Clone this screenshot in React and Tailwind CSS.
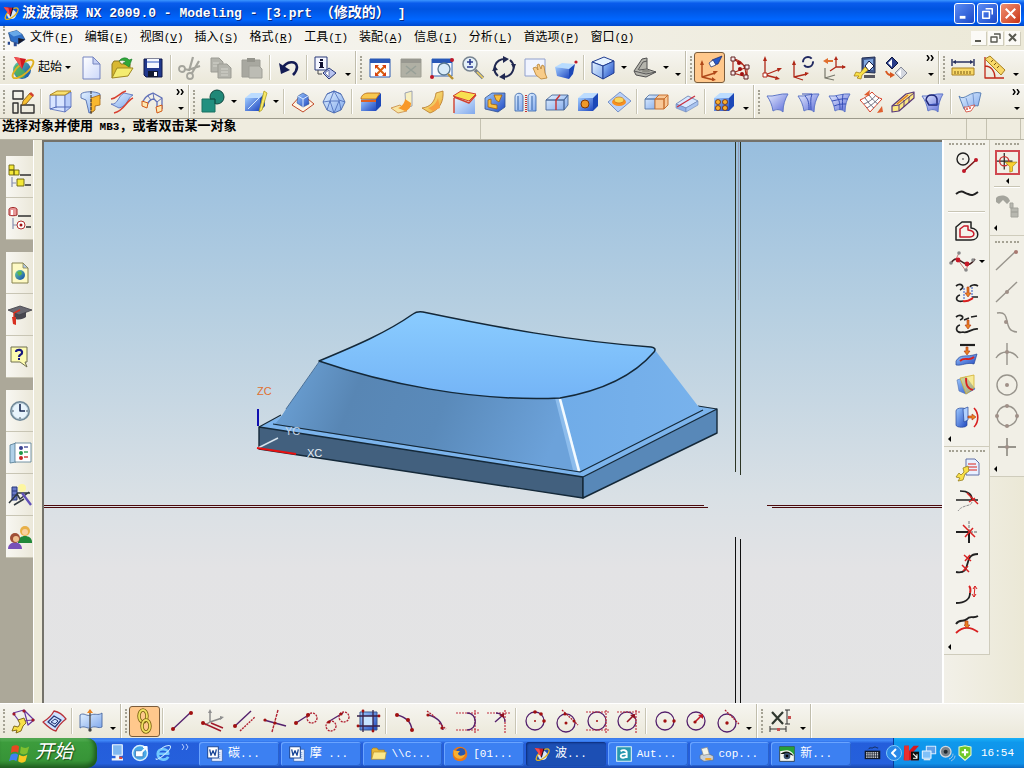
// App.jsx - NX modeling window
import React from "react";

/* ---------- drawing helpers ---------- */

// stroked path
const L = ({ d, c = "#1c1c3c", w = 1, dash }) => (
  <path d={d} fill="none" stroke={c} strokeWidth={w} strokeDasharray={dash} strokeLinejoin="round" />
);

// filled path
const F = ({ d, f, s = "none", w = 1 }) => (
  <path d={d} fill={f} stroke={s} strokeWidth={w} strokeLinejoin="round" />
);

// a set of small dots: [[x, y], ...]
const Dots = ({ at, c = "#a01010", r = 2 }) =>
  at.map(([x, y]) => <circle key={`${x}-${y}`} cx={x} cy={y} r={r} fill={c} />);

const Cube = () => (
  <>
    <F d="M1 6L13 1L23 5L12 10Z" f="#e6f3ff" s="#203c90" />
    <F d="M1 6L12 10V23L1 17Z" f="url(#sky)" s="#203c90" />
    <F d="M12 10L23 5V17L12 23Z" f="url(#blue)" s="#203c90" />
  </>
);

const Box = () => (
  <>
    <F d="M2 8L8 3H22L17 8Z" f="#bcdcff" />
    <F d="M17 8L22 3V16L17 21Z" f="#1c48b8" />
    <F d="M2 8H17V21H2Z" f="url(#blue)" />
  </>
);

const Axes = () => (
  <>
    <L d="M5 3V19L20 13M5 19L17 22" c="#b02818" w={1.3} />
    <F d="M5 0L7 5H3ZM22 12L18 16L17 12ZM20 23L15 24L16 20Z" f="#b02818" />
  </>
);

const Sheet = () => <F d="M1 6C8 7 14 3 22 4C19 9 17 15 17 22C14 19 10 19 7 21C6 15 4 10 1 6Z" f="url(#lav)" s="#6078c8" />;

const Ball = ({ x = 12, y = 12, r = 9 }) => <circle cx={x} cy={y} r={r} fill="none" stroke="#54206c" strokeWidth="1.3" />;

const icons = {
  nx: (
    <>
      <circle cx="11" cy="14" r="9" fill="url(#globe)" />
      <path d="M4 10C7 7 9 12 12 14C16 16 15 20 12 22C6 23 2 17 4 10Z" fill="#58b848" opacity="0.7" />
      <ellipse cx="12" cy="13" rx="13" ry="5" fill="none" stroke="#e0b020" strokeWidth="1.8" transform="rotate(-40 12 13)" />
      <F d="M3 1L15 3L11 13Z" f="#d01820" />
      <F d="M3 1L9 2L11 13Z" f="#f05050" />
    </>
  ),
  nxTitle: (
    <>
      <circle cx="13" cy="14" r="7" fill="#d8e8f8" />
      <ellipse cx="13" cy="13" rx="12" ry="5" fill="none" stroke="#e0b020" strokeWidth="2" transform="rotate(-40 13 13)" />
      <F d="M1 3L15 4L11 17Z" f="#d01820" />
      <F d="M1 3L8 4L11 17Z" f="#f05050" />
      <L d="M15 4L11 17" c="#181028" w={1.6} />
    </>
  ),
  newFile: (
    <>
      <F d="M4 1H14L21 8V23H4Z" f="url(#paper)" s="#7484c0" />
      <F d="M14 1V8H21Z" f="#c4cff4" s="#7484c0" />
    </>
  ),
  open: (
    <>
      <F d="M2 22V8L4 5H9L11 8H20V12" f="#d8b830" s="#8c7820" />
      <F d="M2 22L7 12H23L18 20Z" f="#f4ec70" s="#a08820" />
      <F d="M9 5C12 1 17 1 19 4L22 3L19 11L13 7L16 6C14 4 12 4 9 5Z" f="#30a838" s="#187828" w={0.6} />
    </>
  ),
  save: (
    <>
      <F d="M3 3H21V21H5L3 19Z" f="#20388c" s="#101848" />
      <path d="M6 3H18V12H6Z" fill="#f4f8ff" />
      <path d="M6 5H18V7H6Z" fill="#90a8e0" />
      <path d="M7 15H17V21H7Z" fill="#101830" />
      <path d="M13 16H16V20H13Z" fill="#fff" />
    </>
  ),
  cut: (
    <>
      <L d="M11 15L15 1M14 17L21 5M10 14L22 10" c="#a4a49c" w={2.2} />
      <L d="M11 14L6 13M13 16V18" c="#a4a49c" w={2} />
      <circle cx="4" cy="13" r="3" fill="none" stroke="#a4a49c" strokeWidth="1.800" />
      <circle cx="12" cy="20" r="3" fill="none" stroke="#a4a49c" strokeWidth="1.800" />
    </>
  ),
  copy: (
    <>
      <F d="M2 2H10L14 6V16H2Z" f="#b4b4ac" s="#9c9c94" />
      <F d="M9 8H18L22 12V22H9Z" f="#b4b4ac" s="#9c9c94" />
      <L d="M4 7H10M4 10H8M12 13H19M12 16H19M12 19H19" c="#d4d4cc" />
    </>
  ),
  paste: (
    <>
      <F d="M2 4H20V21H2Z" f="#a8a8a0" s="#9c9c94" />
      <path d="M7 2H15V6H7Z" fill="#94948c" />
      <F d="M9 10H19L22 13V22H9Z" f="#bcbcb4" s="#a0a098" />
    </>
  ),
  undo: (
    <>
      <L d="M6 12C9 5 20 4 20 11C20 15 18 17 16 19" c="#141c54" w={2.6} />
      <F d="M2 7L4 18L13 14Z" f="#141c54" />
    </>
  ),
  info: (
    <>
      <F d="M1 1H13V14H1Z" f="#f4f6ff" s="#283878" />
      <path d="M6 3H9V5H6ZM5 6H9V11H10V12H5V11H6V7H5Z" fill="#101030" />
      <F d="M15 12L22 17L15 23L9 17Z" f="#b8c4f0" s="#283878" />
      <F d="M15 14V21L11 17Z" f="#fff" s="#283878" w={0.6} />
      <L d="M4 14V18H8" c="#484848" />
    </>
  ),
  fit: (
    <>
      <F d="M2 3H22V21H2Z" f="#fff" s="#2858b0" />
      <path d="M2 3H22V7H2Z" fill="#2858b8" />
      <L d="M8 10L17 19M17 10L8 19" c="#d86010" w={2} />
      <F d="M7 9H11L7 13ZM18 9V13L14 9ZM7 20V16L11 20ZM18 20H14L18 16Z" f="#d84010" />
    </>
  ),
  fitGray: (
    <>
      <F d="M2 3H22V21H2Z" f="#b0b0a4" s="#a0a094" />
      <path d="M2 3H22V7H2Z" fill="#989890" />
      <L d="M7 10L17 18M17 10L7 18" c="#98a098" w={1.6} />
    </>
  ),
  zoomWin: (
    <>
      <F d="M2 3H22V20H2Z" f="#f6f9ff" s="#3868b8" />
      <path d="M2 3H22V7H2Z" fill="#2858b8" />
      <circle cx="14" cy="13" r="6" fill="#d8ecf8" stroke="#587890" strokeWidth="1.3" />
      <L d="M18 18L23 23" c="#b89030" w={2.4} />
      <Dots at={[[22, 4], [2, 21]]} c="#c01828" />
    </>
  ),
  zoomIn: (
    <>
      <circle cx="9" cy="8" r="7" fill="#e4f0f8" stroke="#788490" strokeWidth="1.6" />
      <L d="M9 3V9M6 6H12M6 11H12" c="#283890" w={1.6} />
      <L d="M14 14L22 22" c="#788088" w={3.4} />
      <L d="M16 16L22 22" c="#f0d060" w={1.6} />
    </>
  ),
  rotate: (
    <>
      <L d="M6 20C-1 14 3 3 13 3M18 4C25 10 21 21 11 21" c="#202850" w={2} />
      <F d="M11 0L17 3L11 7ZM13 24L7 21L13 17Z" f="#202850" />
      <F d="M19 8L24 8L22 13ZM0 15L3 10L6 14Z" f="#202850" />
    </>
  ),
  pan: (
    <>
      <F d="M2 3H22V20H2Z" f="#f0f4ff" s="#90a0cc" />
      <F d="M10 12L13 11L15 14L14 9L16 8L18 13L19 9L21 10L22 17L24 22L18 23L13 19Z" f="#f8cc88" s="#b88030" w={0.8} />
    </>
  ),
  persp: (
    <>
      <F d="M1 11L8 7L21 8L15 13Z" f="#b8dcff" />
      <F d="M1 11L15 13V23L3 20Z" f="url(#blue)" />
      <F d="M15 13L21 8L19 18L15 23Z" f="#1c48b8" />
      <Dots at={[[22, 6]]} c="#c01828" r={1.6} />
    </>
  ),
  cube: <Cube />,
  wedge: (
    <>
      <F d="M1 15L9 3L14 2V13L23 16L13 21L3 19Z" f="#b4b4ac" s="#505050" />
      <L d="M1 15L13 18L23 16M5 14L10 6L14 5M6 14L14 13" c="#585858" />
      <ellipse cx="13" cy="15" rx="4" ry="1.500" fill="#8c8c84" />
    </>
  ),
  csysTorch: (
    <>
      <L d="M4 8V21L17 17M4 21L16 24" c="#b04818" w={1.4} />
      <F d="M4 4L6 9H2ZM20 15L16 19L15 15ZM18 24L14 25L14 21Z" f="#b04818" />
      <F d="M14 4L24 0L20 8L15 9Z" f="#2858c8" s="#182868" w={0.7} />
      <F d="M11 7L15 4L18 9L13 11Z" f="#f4f8ff" s="#182868" w={0.7} />
    </>
  ),
  csysPoints: (
    <>
      <L d="M4 3V17L18 11M4 3L18 11M4 17L18 21V11M4 3C14 4 17 12 17 21" c="#b02818" w={1.2} />
      <path d="M2 1H6V5H2ZM2 15H6V19H2ZM16 9H20V13H16ZM15 19H19V23H15Z" fill="#f8e8e8" stroke="#602020" />
      <Dots at={[[10, 7], [11, 13], [13, 18]]} r={2} />
    </>
  ),
  csys: (
    <>
      <Axes />
      <path d="M3 17H7V21H3Z" fill="#fff" stroke="#b02818" />
    </>
  ),
  csysRotate: (
    <>
      <L d="M3 8V21L16 18M3 21L12 24" c="#b02818" w={1.3} />
      <F d="M3 4L5 9H1ZM18 17L14 20L14 16Z" f="#b02818" />
      <circle cx="17" cy="6" r="5" fill="none" stroke="#202860" strokeWidth="2" strokeDasharray="12 3" />
    </>
  ),
  csysMove: (
    <>
      <L d="M14 2V11L23 11M14 11L8 15" c="#b02818" w={1.3} />
      <F d="M14 0L16 4H12ZM24 11L20 13V9Z" f="#b02818" />
      <L d="M3 12V22L13 19M3 22L12 24" c="#78786c" w={1.2} />
      <F d="M1 5L6 2V4H11V6H6V8Z" f="#e07030" />
    </>
  ),
  displayWrench: (
    <>
      <F d="M9 2L22 1V17L9 16Z" f="#40588c" s="#202c50" />
      <F d="M11 4L20 3V14L11 13Z" f="#80a8e0" />
      <F d="M16 5L21 10L16 15L12 10Z" f="#fff" s="#101840" />
      <path d="M11 19H22V22H11Z" fill="#585860" />
      <F d="M1 20L3 16L7 17L12 11L15 14L9 19L8 23L4 22L6 20Z" f="#f8e048" s="#a07810" w={0.7} />
    </>
  ),
  swapDiamonds: (
    <>
      <F d="M8 1L14 7L8 13L2 7Z" f="#283c88" s="#101840" />
      <F d="M8 3V11L4 7Z" f="#fff" />
      <F d="M17 11L23 17L17 23L11 17Z" f="#d4d8e0" s="#888c98" />
      <F d="M17 13V21L13 17Z" f="#fff" />
      <L d="M2 15C3 18 5 19 7 19" c="#d85820" w={2} />
      <F d="M6 16L11 19L6 22Z" f="#d85820" />
    </>
  ),
  ruler: (
    <>
      <L d="M1 3V10M23 3V10M3 6H21" c="#283060" w={1.4} />
      <F d="M1 6L5 4V8ZM23 6L19 4V8Z" f="#283060" />
      <F d="M1 12H23V19H1Z" f="#f8d868" s="#a88020" />
      <L d="M4 15V18M7 15V18M10 15V18M13 15V18M16 15V18M19 15V18" c="#785810" />
    </>
  ),
  angle: (
    <>
      <L d="M3 1V22H22M3 10C9 10 13 15 13 22" c="#c02818" w={1.3} />
      <F d="M3 3L8 0L23 14L19 19Z" f="#f8d868" s="#a88020" />
      <L d="M9 6L11 4M12 9L14 7M15 12L17 10" c="#785810" />
    </>
  ),

  /* feature bar */
  sketch: (
    <>
      <L d="M2 1H12V9H2ZM2 13H7V23H2ZM10 15V23H23V15Z" c="#303030" w={1.4} />
      <F d="M11 15L12 11L19 3L22 6L15 14Z" f="#f8c030" s="#785010" w={0.8} />
      <path d="M18 4L20 2L23 5L22 7Z" fill="#d04030" />
    </>
  ),
  extrude: (
    <>
      <F d="M2 5V19L17 22L17 5Z" f="#d8e4ff" s="#5068b8" w={0.8} />
      <F d="M17 5L23 2V17L17 22Z" f="#b8ccf8" s="#5068b8" w={0.8} />
      <L d="M8 3V18M2 19L8 17L23 17" c="#5068b8" />
      <F d="M2 5L9 1H23L17 5Z" f="#f8e070" s="#b08820" />
    </>
  ),
  revolve: (
    <>
      <F d="M2 4C5 1 17 1 21 4V9H17L15 21L10 23L7 10L2 8Z" f="url(#sky)" s="#4060a8" w={0.8} />
      <F d="M12 8L21 5V15L16 16V20L12 23Z" f="#f8b830" s="#a86810" w={0.8} />
      <L d="M12 1V24" c="#303030" dash="3 1" />
    </>
  ),
  sweep: (
    <>
      <F d="M1 14C8 15 8 6 14 3L23 5C17 8 18 16 9 18Z" f="url(#sky)" s="#5068b8" w={0.8} />
      <L d="M1 9C8 8 9 3 16 1M4 23C14 21 16 11 23 8" c="#d84030" w={1.4} />
    </>
  ),
  tube: (
    <>
      <L d="M2 12C4 5 10 4 12 3L21 8V19M6 15C8 10 11 9 13 9L16 12V21" c="#6070b8" w={1.3} />
      <L d="M12 3L13 9M7 6L10 10M21 8L16 12" c="#6070b8" />
      <path d="M1 11L7 13L6 18L1 16ZM15 17L21 15V21L16 23Z" fill="#ffe8b0" stroke="#d05818" />
    </>
  ),
  unite: (
    <>
      <circle cx="16" cy="7" r="7" fill="#208878" stroke="#104840" />
      <path d="M1 9H14V22H1Z" fill="#209080" stroke="#187060" />
      <L d="M9 9H14V14" c="#104840" />
    </>
  ),
  trimBody: (
    <>
      <Box />
      <F d="M16 22L21 1L24 3L19 20Z" f="#f8e868" s="#b0a020" w={0.8} />
      <L d="M5 19L16 8" c="#d8ecff" />
    </>
  ),
  offset: (
    <>
      <F d="M1 15L11 4L23 14L12 22Z" f="#fff4e4" s="#c04828" />
      <F d="M7 6L12 3L17 6L18 14L12 17L6 13Z" f="url(#blue)" s="#305090" w={0.6} />
      <L d="M12 9V17M7 6L12 9L17 6" c="#d8e8ff" />
    </>
  ),
  facets: (
    <>
      <F d="M12 1L19 4L23 12L19 20L12 23L5 20L1 12L5 4Z" f="url(#sky)" s="#3858a0" w={0.8} />
      <L d="M12 1L8 11L1 12M12 1L17 10L23 12M8 11H17L12 23ZM8 11L5 20M17 10L19 20M5 4L12 1L19 4" c="#4868b8" w={0.8} />
    </>
  ),
  blend: (
    <>
      <Box />
      <F d="M2 9C2 5 6 3 9 3H21L17 9Z" f="#f8c850" s="#b06010" w={0.8} />
      <path d="M2 10H17V12H2Z" fill="#e06020" />
    </>
  ),
  faceBlend: (
    <>
      <F d="M1 18L10 15L17 21L8 23Z" f="#f8e4a0" s="#c88840" w={0.8} />
      <F d="M15 3L22 1V16L16 18Z" f="#f8f0c0" s="#8890a8" w={0.8} />
      <F d="M8 18C12 17 15 12 15 9L21 13C21 17 19 20 15 21Z" f="#f89828" />
    </>
  ),
  softBlend: (
    <>
      <F d="M1 18C10 17 14 11 15 3L22 1C23 12 18 20 9 23Z" f="url(#gold)" s="#b87828" w={0.8} />
      <F d="M7 18C12 17 16 12 17 8L19 18L12 21Z" f="#f8a040" />
    </>
  ),
  sheetBlend: (
    <>
      <F d="M2 8L16 13L23 8V24H2Z" f="url(#sky)" />
      <F d="M1 6L9 1L24 4L17 11Z" f="#f8e050" s="#d04030" />
      <L d="M2 8V23M2 7L17 13L24 5" c="#d04030" w={1.4} />
    </>
  ),
  shell: (
    <>
      <F d="M2 8L9 3H22V17L15 22L2 19Z" f="url(#blue)" s="#305090" w={0.8} />
      <F d="M5 10L8 9V14L14 15V19L5 17ZM11 5H19L16 12L13 10Z" f="#f8c040" s="#a06010" w={0.8} />
    </>
  ),
  thread: (
    <>
      <F d="M1 21V7C1 2 9 2 9 7V21Z" f="url(#sky)" s="#3060a8" w={0.8} />
      <F d="M14 21V7C14 2 22 2 22 7V21Z" f="url(#sky)" s="#3060a8" w={0.8} />
      <L d="M12 5V22" c="#c83030" w={2} dash="1 1" />
      <L d="M4 6V20M18 6V20" c="#3060a8" />
    </>
  ),
  split: (
    <>
      <F d="M1 10L7 5H23L19 10ZM1 10H19V20H1ZM19 10L23 5V15L19 20Z" f="url(#sky)" s="#486898" w={0.9} />
      <L d="M11 20V10L15 5" c="#c83030" w={1.4} />
    </>
  ),
  hole: (
    <>
      <Box />
      <circle cx="9" cy="14" r="4" fill="#f09828" stroke="#803808" />
    </>
  ),
  emboss: (
    <>
      <F d="M1 12L13 2L24 11L11 22Z" f="#b8d0f8" s="#6080c0" w={0.8} />
      <ellipse cx="12" cy="12" rx="7" ry="4" fill="#f89020" />
      <ellipse cx="12" cy="10" rx="5" ry="3" fill="#f8d860" stroke="#c06810" strokeWidth="0.6" />
    </>
  ),
  pattern: (
    <>
      <F d="M1 9L5 5H15L11 9ZM1 9H11V19H1Z" f="url(#sky)" s="#5878a8" w={0.9} />
      <F d="M11 9L15 5H24L20 9ZM11 9H20V19H11ZM20 9L24 5V15L20 19Z" f="#f8c898" s="#c87030" />
    </>
  ),
  slab: (
    <>
      <F d="M1 14L13 6L23 11L11 18Z" f="#d8e8ff" s="#7088b8" w={0.9} />
      <F d="M1 14V18L11 22V18Z" f="#90b0e8" s="#7088b8" w={0.6} />
      <F d="M11 18L23 11V15L11 22Z" f="#a8c4f0" s="#7088b8" w={0.6} />
      <L d="M2 17L20 6" c="#c83040" w={1.3} />
    </>
  ),
  instance: (
    <>
      <Box />
      <Dots at={[[6, 12], [13, 12], [6, 18], [13, 18]]} c="#803808" r={2.8} />
      <Dots at={[[6, 12], [13, 12], [6, 18], [13, 18]]} c="#f8b030" r={2} />
    </>
  ),
  sheet1: <Sheet />,
  sheet2: (
    <>
      <Sheet />
      <L d="M8 6C12 10 12 15 12 20M15 4C13 9 14 14 14 20M5 4L15 4" c="#3850b8" />
    </>
  ),
  sheet3: (
    <>
      <Sheet />
      <L d="M8 6C12 10 12 15 12 20M15 4C14 9 15 14 14 20M4 11C10 10 14 8 20 9M6 16C11 14 14 14 18 14" c="#3850b8" />
    </>
  ),
  grid4: (
    <>
      <F d="M1 10C6 8 10 5 13 2C16 6 20 8 23 9C19 13 15 18 11 22C8 18 4 13 1 10Z" f="#fff" s="#d84028" />
      <L d="M6 8C9 12 12 16 15 18M10 5C13 9 16 12 19 14M5 14C10 12 14 9 17 5M8 18C13 15 17 11 20 8" c="#707080" />
      <F d="M5 5L11 0L10 6ZM18 23L23 16L24 22Z" f="#e06030" />
    </>
  ),
  studio: (
    <>
      <F d="M2 16L16 4L24 2V8L9 21L2 22Z" f="#fbe880" s="#583878" w={1.2} />
      <L d="M2 16L9 15L24 3M9 15V21M14 10V17M19 7V13" c="#583878" />
      <L d="M7 14L18 5" c="#e07820" w={1.4} />
    </>
  ),
  trimSheet: (
    <>
      <Sheet />
      <L d="M5 10C6 3 15 4 16 9V15H8Z" c="#202878" w={1.5} />
      <L d="M8 15C12 14 15 14 18 14" c="#3850b8" />
    </>
  ),
  waves: (
    <>
      <F d="M1 6C6 12 12 0 23 3L20 16C15 14 12 22 6 19Z" f="url(#sky)" s="#5078b0" w={0.9} />
      <L d="M8 8L11 18M15 4L16 15" c="#7898d0" />
      <F d="M6 17C10 18 13 15 17 15L13 21L8 22Z" f="#fff" s="#d04030" w={0.8} />
      <Dots at={[[9, 19], [12, 18]]} c="#e05040" r={1} />
    </>
  ),

  /* resource bar */
  assemblyNav: (
    <>
      <path d="M1 0H6V5H1ZM1 5H6V10H1ZM6 5H11V10H6ZM9 14H16V21H9Z" fill="#f4e838" stroke="#686010" strokeWidth="0.9" />
      <L d="M12 10H23M17 20H23" c="#303030" w={1.3} />
      <L d="M4 12V22M4 18H8" c="#8890b0" w={1.2} />
    </>
  ),
  partNav: (
    <>
      <F d="M1 2C2 0 8 0 9 2V8C8 9 2 9 1 8Z" f="#e89898" s="#a02828" />
      <path d="M3 3H5V8H3Z" fill="#fff" />
      <L d="M10 9H23M18 20H23" c="#303030" w={1.3} />
      <L d="M5 11V22M5 18H9" c="#8890b0" w={1.2} />
      <circle cx="13" cy="18" r="4" fill="#fff" stroke="#b03030" />
      <Dots at={[[13, 18]]} r={1.5} />
    </>
  ),
  web: (
    <>
      <F d="M4 2H15L20 7V22H4Z" f="#fdf9c4" s="#888450" />
      <F d="M15 2V7H20Z" f="#b0c8e8" s="#888450" w={0.8} />
      <circle cx="12" cy="14" r="5" fill="url(#globe)" />
      <F d="M9 11L13 10L14 13L11 15Z" f="#60b840" />
    </>
  ),
  training: (
    <>
      <F d="M6 10V15C10 18 15 16 18 14V9Z" f="#484850" />
      <F d="M0 7L12 3L24 7L11 12Z" f="#686870" s="#404048" w={0.8} />
      <L d="M12 7L6 10V17" c="#d83020" w={1.4} />
      <F d="M4 14H8V22L5 21Z" f="#d83020" />
    </>
  ),
  help: (
    <>
      <F d="M3 2H19V17H17L19 22L12 17H3Z" f="#fdfbb0" s="#707050" />
      <L d="M8 7C8 4 15 4 14 8C14 10 11 9 11 12" c="#181880" w={2.2} />
      <path d="M10 13H12V15H10Z" fill="#181880" />
    </>
  ),
  clock: (
    <>
      <circle cx="12" cy="12" r="10" fill="#708898" />
      <circle cx="12" cy="12" r="8" fill="#e8f4fc" stroke="#b8ccd8" />
      <L d="M12 5V12H17" c="#182850" w={1.6} />
      <Dots at={[[12, 19], [5, 12], [19, 12]]} c="#384858" r={0.8} />
    </>
  ),
  palette: (
    <>
      <F d="M2 4L8 2V21L2 22Z" f="#b0d0e8" s="#507890" w={0.8} />
      <F d="M7 2H23V21H7Z" f="#fff" s="#507890" w={0.8} />
      <Dots at={[[13, 7]]} c="#384090" />
      <Dots at={[[13, 12]]} c="#209848" />
      <Dots at={[[13, 17]]} c="#c82828" />
      <L d="M16 6H20" c="#384090" w={1.3} />
      <L d="M16 11H20" c="#209848" w={1.3} />
      <L d="M16 16H20" c="#c82828" w={1.3} />
    </>
  ),
  wizard: (
    <>
      <circle cx="14" cy="5" r="4" fill="#fdf6a0" />
      <path d="M4 4H9V17H4Z" fill="#6878c8" stroke="#283878" />
      <L d="M4 8H9M4 12H9" c="#283878" />
      <L d="M1 20L9 11L12 16L21 9M9 10H22M6 22L16 16" c="#303840" w={1.5} />
      <L d="M14 10L23 22" c="#6050b8" w={2.4} />
    </>
  ),
  people: (
    <>
      <F d="M10 17C10 9 24 9 24 17V18H10Z" f="#208838" />
      <circle cx="17" cy="6" r="5" fill="#e8b048" />
      <circle cx="17" cy="7" r="3" fill="#f8d0a0" />
      <F d="M0 24C0 15 14 15 14 24Z" f="#7850b8" />
      <circle cx="7" cy="13" r="5" fill="#a05038" />
      <circle cx="8" cy="14" r="3" fill="#f0c090" />
    </>
  ),

  /* right hand bars */
  lineArc: (
    <>
      <circle cx="8" cy="8" r="6" fill="none" stroke="#202020" strokeWidth="1.4" />
      <Dots at={[[8, 8]]} c="#202020" r={0.8} />
      <L d="M9 20L21 9" c="#781818" w={1.6} />
      <Dots at={[[9, 20], [21, 9]]} c="#c01828" />
    </>
  ),
  spline: <L d="M1 12C7 7 9 11 13 12C17 14 19 13 23 10" c="#202020" w={2} />,
  offsetCurve: (
    <>
      <L d="M1 21V8L7 3H16V9C25 10 25 21 16 21Z" c="#202020" w={1.5} />
      <L d="M5 18V10L9 7H13V11C21 12 20 18 15 18Z" c="#c81828" w={1.5} />
    </>
  ),
  curveFit: (
    <>
      <L d="M-4 13C1 5 4 11 9 13C14 16 16 14 20 9" c="#402020" w={1.6} />
      <L d="M4 3L1 9L3 10L11 21L13 14" c="#c06060" w={0.8} />
      <Dots at={[[4, 3], [11, 20], [-4, 13], [18, 10]]} c="#888" r={1.8} />
      <Dots at={[[3, 10], [12, 14]]} c="#c81828" r={2.4} />
    </>
  ),
  bridge: (
    <>
      <L d="M1 5C6 1 11 6 5 9M5 14C0 15 0 22 8 20M15 6C16 4 20 3 23 5M17 16L23 16" c="#202020" w={1.7} />
      <L d="M9 7V19M17 6V16" c="#3058c8" dash="2 1" />
      <L d="M8 20C13 21 16 18 18 17" c="#d82020" w={2} />
      <F d="M12 6H14V12H16L13 16L10 12H12Z" f="#e88020" s="#b03010" w={0.6} />
    </>
  ),
  simplify: (
    <>
      <L d="M1 5C6 1 11 6 5 8M5 13C0 14 0 22 8 20C12 22 17 16 23 17" c="#202020" w={1.7} />
      <L d="M9 8L14 6M16 5L22 4" c="#202020" w={1.7} />
      <F d="M12 8H14V13H16L13 17L10 13H12Z" f="#e88020" s="#b03010" w={0.6} />
    </>
  ),
  project: (
    <>
      <L d="M5 2H20" c="#202020" w={2.2} />
      <F d="M1 18C6 10 10 15 22 11L19 21C12 19 7 23 1 22Z" f="url(#blue)" s="#284898" w={0.7} />
      <L d="M5 18C10 13 14 19 19 14" c="#d82020" w={1.8} />
      <F d="M11 4H13V8H15L12 12L9 8H11Z" f="#e88020" s="#b03010" w={0.6} />
    </>
  ),
  intersect: (
    <>
      <F d="M2 6L11 3L20 15L11 20L4 17Z" f="url(#blue)" s="#5070b0" w={0.6} />
      <F d="M5 4L19 1V14L11 20Z" f="#f8e46099" s="#d0b030" w={0.8} />
      <L d="M11 4C11 11 12 14 18 16" c="#d82020" w={1.8} />
    </>
  ),
  wrap: (
    <>
      <F d="M1 6C1 2 12 2 12 6V20C12 23 1 23 1 20Z" f="url(#blue)" s="#284898" w={0.7} />
      <F d="M8 4L13 2V15L9 17Z" f="#b0d0ff" s="#284898" w={0.7} />
      <F d="M13 11H17V9L21 12L17 15V13H13Z" f="#e88020" s="#b03010" w={0.6} />
      <L d="M19 3C24 8 24 17 19 22" c="#d82020" w={1.6} />
    </>
  ),
  wrenchDoc: (
    <>
      <F d="M11 1H20L24 5V17H11Z" f="#e8f0ff" s="#6070a8" />
      <L d="M13 6H21M13 9H22M13 12H22" c="#e06868" w={1.4} />
      <F d="M1 19L4 15L6 17L9 14L8 10L13 8L14 13L10 16L8 22L3 23L5 20Z" f="#f8e048" s="#988020" w={0.8} />
    </>
  ),
  trimCurve: (
    <>
      <L d="M5 2C12 2 17 4 17 11M1 11H23" c="#202020" w={1.7} />
      <L d="M17 13C16 18 8 15 3 22" c="#909090" dash="3 1" />
      <L d="M12 4L23 15M20 9L14 13" c="#d82020" w={1.4} />
    </>
  ),
  trimCorner: (
    <>
      <L d="M1 12H14V23" c="#202020" w={2} />
      <L d="M14 1V12H23" c="#909090" dash="3 1" w={1.3} />
      <L d="M8 5L20 17M10 17L18 8" c="#d82020" w={1.5} />
    </>
  ),
  divide: (
    <>
      <L d="M1 21C19 24 6 3 23 3" c="#202020" w={1.8} />
      <L d="M9 4L16 10M15 4L10 10M7 14L14 21M13 15L8 20" c="#d82020" w={1.5} />
    </>
  ),
  length: (
    <>
      <L d="M1 21C10 21 15 17 15 11" c="#202020" w={1.8} />
      <L d="M15 11C16 7 15 5 14 4" c="#d82020" w={2} />
      <L d="M20 4L19 15M18 7L20 4L22 7M17 12L19 15L21 12" c="#d82020" />
    </>
  ),
  smooth: (
    <>
      <L d="M1 11C5 5 8 10 12 6C15 2 18 6 23 3" c="#202020" w={1.9} />
      <L d="M1 20C8 13 16 14 23 19" c="#d82020" w={1.9} />
      <F d="M10 8H13V12H15L12 15L9 12H10Z" f="#e88020" s="#b03010" w={0.6} />
    </>
  ),
  snapFilter: (
    <>
      <L d="M9 1V19M1 10H18" c="#202020" w={1.3} />
      <circle cx="9" cy="10" r="5" fill="none" stroke="#c83030" strokeWidth="1.5" />
      <F d="M10 11H23L18 16V21L15 22V16Z" f="#f8d030" s="#a08010" w={0.7} />
    </>
  ),
  phone: (
    <>
      <path d="M1 4C5 0 13 1 15 7L12 10L8 6L4 10L1 8Z" fill="#a4a49c" />
      <path d="M15 9H18V14H15ZM16 14H23V18H16ZM16 18H23V23H16Z" fill="#b8b8b0" stroke="#a4a49c" />
    </>
  ),
  snapEnd: (
    <>
      <L d="M1 21L20 3" c="#98948c" w={1.4} />
      <Dots at={[[21, 3]]} c="#a87870" />
    </>
  ),
  snapMid: (
    <>
      <L d="M1 22L22 2" c="#98948c" w={1.4} />
      <Dots at={[[12, 12]]} c="#a09088" />
    </>
  ),
  snapCtrl: (
    <>
      <L d="M2 2C18 -1 6 20 22 21" c="#98948c" w={1.4} />
      <Dots at={[[11, 11]]} c="#a09088" />
    </>
  ),
  snapInt: (
    <>
      <L d="M12 1V23M1 16C6 8 18 8 23 16" c="#98948c" w={1.4} />
      <Dots at={[[12, 10]]} c="#a09088" />
    </>
  ),
  snapCenter: (
    <>
      <circle cx="12" cy="12" r="10" fill="none" stroke="#98948c" strokeWidth="1.4" />
      <Dots at={[[12, 12]]} c="#a09088" />
    </>
  ),
  snapQuad: (
    <>
      <circle cx="12" cy="12" r="10" fill="none" stroke="#98948c" strokeWidth="1.4" />
      <Dots at={[[12, 2], [12, 22], [2, 12], [22, 12]]} c="#a09088" />
    </>
  ),
  snapPoint: (
    <>
      <L d="M12 3V21M3 12H21" c="#98948c" w={1.8} />
      <Dots at={[[12, 12]]} c="#a09088" />
    </>
  ),

  /* bottom bar */
  sketchWrench: (
    <>
      <L d="M2 4L13 1L23 11L17 16L13 1M2 4L8 12L23 11" c="#6838a0" w={1.2} />
      <F d="M1 22L3 17L7 18L9 15L7 11L13 9L15 14L12 17L10 22L5 24L6 21Z" f="#f8e048" s="#786010" w={0.9} />
      <Dots at={[[13, 2], [22, 11], [3, 5]]} c="#a01828" r={1.6} />
    </>
  ),
  sketchFace: (
    <>
      <F d="M1 13C6 10 10 6 12 2C17 3 21 6 24 10C20 13 16 17 14 22C9 21 5 17 1 13Z" f="#d0e4ff" s="#b83038" w={1.3} />
      <L d="M6 13L12 7L19 11L13 18Z" c="#283878" w={1.3} />
      <L d="M9 13L13 10L16 12L13 15Z" c="#283878" />
    </>
  ),
  mirror: (
    <>
      <F d="M1 6C5 3 8 8 12 6C16 4 19 7 23 4V18C19 20 16 16 12 19C8 20 5 16 1 19Z" f="url(#sky)" s="#4868a0" w={0.9} />
      <L d="M11 1V22" c="#505050" w={1.4} />
      <F d="M11 0L14 4H8Z" f="#e88020" />
      <Dots at={[[11, 21]]} c="#404040" r={1.7} />
    </>
  ),
  chain: (
    <>
      <ellipse cx="10" cy="7" rx="4" ry="6" fill="none" stroke="#786010" strokeWidth="3.400" />
      <ellipse cx="10" cy="7" rx="4" ry="6" fill="none" stroke="#f0e060" strokeWidth="1.800" />
      <ellipse cx="13" cy="17" rx="4" ry="6" fill="none" stroke="#786010" strokeWidth="3.400" />
      <ellipse cx="13" cy="17" rx="4" ry="6" fill="none" stroke="#f0e060" strokeWidth="1.800" />
    </>
  ),
  lineEnds: (
    <>
      <L d="M3 20L20 4" c="#54206c" w={1.4} />
      <Dots at={[[3, 20], [21, 4]]} />
    </>
  ),
  lineAxes: (
    <>
      <L d="M9 2V13L21 9M9 13L4 16" c="#888" w={1.4} />
      <F d="M9 0L11 4H7ZM23 8L19 11V7Z" f="#909090" />
      <L d="M2 14L20 22M10 14L22 19" c="#a01828" w={1.4} />
      <Dots at={[[2, 14]]} />
    </>
  ),
  parallel: (
    <>
      <L d="M3 17L19 2" c="#54206c" w={1.4} />
      <L d="M8 22L23 8" c="#b02030" w={1.4} dash="2 1" />
      <Dots at={[[3, 17]]} />
    </>
  ),
  perpendicular: (
    <>
      <L d="M1 11L23 17" c="#54206c" w={1.4} />
      <L d="M15 1L9 23" c="#b02030" w={1.4} dash="3 1" />
      <Dots at={[[2, 11], [12, 14]]} r={1.6} />
    </>
  ),
  tangentLine: (
    <>
      <L d="M2 14L16 5" c="#54206c" w={1.4} />
      <circle cx="18" cy="9" r="5" fill="none" stroke="#b02030" strokeWidth="1.300" strokeDasharray="2 1" />
      <Dots at={[[2, 14], [14, 6]]} />
    </>
  ),
  tangentTwo: (
    <>
      <L d="M3 13L18 4" c="#54206c" w={1.4} />
      <circle cx="19" cy="8" r="5" fill="none" stroke="#b02030" strokeWidth="1.300" strokeDasharray="2 1" />
      <circle cx="6" cy="17" r="5" fill="none" stroke="#b02030" strokeWidth="1.300" strokeDasharray="2 1" />
      <Dots at={[[4, 13], [16, 5]]} r={1.6} />
    </>
  ),
  trimGrid: (
    <>
      <F d="M4 3H21V21H4Z" f="url(#blue)" s="#385890" />
      <path d="M7 7H17V17H7Z" fill="#c8e4ff" />
      <L d="M7 1V23M17 1V23M1 7H24M1 17H24" c="#382048" w={1.3} />
      <Dots at={[[7, 2], [2, 17], [23, 7], [17, 22]]} r={1.4} />
    </>
  ),
  arc1: (
    <>
      <L d="M4 6C13 8 18 12 19 21" c="#54206c" w={1.4} />
      <Dots at={[[4, 6], [15, 11], [19, 21]]} />
    </>
  ),
  arc2: (
    <>
      <L d="M4 6C13 8 18 12 19 21" c="#54206c" w={1.4} />
      <L d="M3 2L11 8M15 14L22 20" c="#b02030" dash="2 1" w={1.3} />
      <Dots at={[[4, 6], [18, 19]]} r={1.6} />
    </>
  ),
  arc3: (
    <>
      <L d="M1 4H24M1 21H24M20 1V24" c="#c03040" dash="2 1" w={1.2} />
      <L d="M12 4C23 4 23 21 12 21" c="#54206c" w={1.4} />
    </>
  ),
  arc4: (
    <>
      <L d="M1 4H24M19 1V24" c="#c03040" dash="2 1" w={1.2} />
      <L d="M10 4C15 4 19 8 19 13M9 13L17 6" c="#54206c" w={1.4} />
      <F d="M18 4V9L13 6Z" f="#901020" />
    </>
  ),
  circ1: (
    <>
      <Ball />
      <Dots at={[[12, 12]]} r={1} />
      <Dots at={[[12, 3], [18, 5], [21, 12]]} r={1.8} />
    </>
  ),
  circ2: (
    <>
      <Ball y={14} />
      <L d="M8 1L24 16" c="#b02030" dash="2 1" w={1.3} />
      <Dots at={[[11, 5], [12, 14], [20, 12]]} r={1.5} />
    </>
  ),
  circ3: (
    <>
      <Ball />
      <L d="M1 3H24M1 21H24M21 1V24" c="#c03040" dash="2 1" w={1.2} />
      <Dots at={[[12, 12]]} r={1} />
    </>
  ),
  circ4: (
    <>
      <Ball x={11} />
      <L d="M1 3H24M20 1V24" c="#c03040" dash="2 1" w={1.2} />
      <L d="M11 13L18 6" c="#901020" w={1.6} />
      <F d="M19 5V10L14 6Z" f="#901020" />
    </>
  ),
  circ5: (
    <>
      <Ball />
      <Dots at={[[12, 12], [21, 12]]} r={1.7} />
    </>
  ),
  circ6: (
    <>
      <Ball />
      <L d="M11 13L17 7" c="#c01828" w={1.6} />
      <F d="M19 5V10L14 6Z" f="#c01828" />
      <Dots at={[[11, 13]]} r={1.6} />
    </>
  ),
  circ7: (
    <>
      <Ball y={14} />
      <L d="M10 1L24 15" c="#b02030" dash="2 1" w={1.3} />
      <Dots at={[[12, 14]]} r={1.7} />
    </>
  ),
  dimension: (
    <>
      <L d="M3 3L14 15M14 3L3 15" c="#303830" w={2.2} />
      <L d="M18 1V15M16 1H21M16 15H21M1 20H17M1 17V23M17 17V23" c="#303030" />
      <path d="M19 7H22V10H19ZM8 19H11V22H8Z" fill="#c85050" />
    </>
  ),

  /* task bar */
  word: (
    <>
      <F d="M7 5H23V23H7Z" f="#e8f0ff" s="#2858a8" />
      <F d="M1 1H17V18H1Z" f="#fff" s="#1c4898" w={1.6} />
      <L d="M4 5L6 14L9 7L12 14L14 5" c="#1c4898" w={2} />
      <L d="M19 9V20" c="#90b0e0" w={2} dash="2 1" />
    </>
  ),
  folder: (
    <>
      <F d="M1 20V5L3 3H9L11 6H20V9" f="#e8b838" s="#a87818" />
      <F d="M1 20L4 9H23L21 20Z" f="#fbe88c" s="#b89028" />
    </>
  ),
  firefox: (
    <>
      <circle cx="12" cy="12" r="11" fill="#e87818" />
      <circle cx="13" cy="10" r="7" fill="#2858b0" />
      <path d="M2 6C6 8 9 7 12 8L9 11C9 15 15 16 20 12C18 21 6 21 3 14Z" fill="#f8b030" />
    </>
  ),
  acad: (
    <>
      <F d="M1 1H23V23H1Z" f="#2898b0" s="#e0f4f8" w={1.6} />
      <L d="M7 8C10 5 16 6 16 10V18M16 12C10 11 7 13 7 15C7 19 14 18 16 15" c="#fff" w={2.8} />
    </>
  ),
  copier: (
    <>
      <F d="M3 14L12 10L23 15V21L9 23L3 19Z" f="#c8d0d8" s="#607080" />
      <F d="M5 4L14 2L17 12L8 14Z" f="#f4f4e8" s="#888" />
      <F d="M11 18H20V21H11Z" f="#f0a830" />
    </>
  ),
  eye: (
    <>
      <path d="M1 1H23V23H1Z" fill="#f4f8f4" stroke="#101810" />
      <path d="M1 1H23V14C15 2 7 8 1 8Z" fill="#28a038" />
      <path d="M2 12C8 6 17 7 22 15C15 11 8 12 2 12Z" fill="#101810" />
      <circle cx="12" cy="15" r="5" fill="#385070" />
      <Dots at={[[12, 15]]} c="#000" />
    </>
  ),
  ie: (
    <>
      <L d="M19 17C16 23 5 22 5 13C5 5 19 5 19 13H6" c="#70c8ff" w={3.6} />
      <L d="M3 19C0 26 24 8 22 3C20 0 12 4 9 7" c="#c8e8ff" w={1.4} />
    </>
  ),
  mail: (
    <>
      <circle cx="12" cy="12" r="10" fill="#48a8e8" stroke="#d8f0ff" strokeWidth="2" />
      <path d="M6 9H16V17H6Z" fill="#fff" stroke="#3070b0" />
      <L d="M12 13L21 4M16 4H21V9" c="#f8fcff" w={2.4} />
    </>
  ),
  desktop: (
    <>
      <F d="M6 1H19V15H6Z" f="#80b8f0" s="#f0f8ff" w={1.6} />
      <path d="M10 15H15V19H10ZM5 19H20V22H5Z" fill="#f0f4f8" />
      <path d="M15 17H19V20H15Z" fill="#e04838" />
    </>
  ),
  keyboard: (
    <>
      <L d="M6 6C9 2 11 6 14 3C17 2 18 5 20 4" c="#101828" />
      <path d="M1 8H23V20H1Z" fill="#101828" />
      <L d="M3 11H21M3 14H21M3 17H21" c="#fff" w={1.8} dash="2 1" />
    </>
  ),
  kav: (
    <>
      <path d="M2 1H9V9L16 1H24L15 11L23 23H1Z" fill="#d81820" />
      <path d="M2 1H9V23H2Z" fill="#e83030" />
      <path d="M12 10H24V23H12Z" fill="#101010" />
      <L d="M15 13L21 19M21 14V20H15" c="#fff" w={1.6} />
    </>
  ),
  network: (
    <>
      <F d="M8 2H22V13H8Z" f="#60a0e8" s="#d8ecff" w={1.6} />
      <F d="M2 9H15V20H2Z" f="#80c0f8" s="#e8f4ff" w={1.6} />
      <path d="M4 21H14V23H4Z" fill="#d8e4f0" />
    </>
  ),
  volume: (
    <>
      <circle cx="10" cy="10" r="8" fill="#788088" stroke="#d0d8e0" strokeWidth="2" />
      <circle cx="10" cy="10" r="3" fill="#202830" />
      <L d="M15 21C19 20 21 17 21 13M18 24C22 22 24 19 24 16" c="#a8c8e8" w={1.4} />
    </>
  ),
  shield: (
    <>
      <F d="M3 3L12 1L21 3V15L12 23L3 15Z" f="#70c828" s="#e8f8d0" w={1.6} />
      <L d="M12 6V16M7 11H17" c="#fff" w={3} />
    </>
  ),
  flag: (
    <>
      <path d="M3 5C6 3 9 3 11 5L10 12C8 10 5 10 2 12Z" fill="#e84820" />
      <path d="M13 5C16 7 19 7 22 5L20 12C18 14 14 14 12 12Z" fill="#80c030" />
      <path d="M2 14C5 12 8 12 10 14L8 21C6 19 3 19 0 21Z" fill="#4080f0" />
      <path d="M11 14C14 16 17 16 20 14L18 21C16 23 12 23 10 21Z" fill="#f8c820" />
    </>
  ),
  part: (
    <>
      <F d="M2 5L13 2L20 7L24 14L15 20L5 16Z" f="#3070c8" s="#183868" w={0.8} />
      <F d="M2 5L13 2L20 7L9 10Z" f="#68a8e8" />
      <path d="M15 12L24 14L15 20Z" fill="#181828" />
      <path d="M1 17H4V21H1ZM9 18H13V23H9Z" fill="#284890" />
    </>
  ),
};

const Icon = ({ name, className = "h-6 w-6" }) => (
  <svg viewBox="0 0 24 24" className={`${className} shrink-0 overflow-visible`} aria-hidden="true">
    {icons[name]}
  </svg>
);

// gradients used by all icons
const Gradients = () => {
  const stops = {
    blue: ["#a0ccff", "#2048c0"],
    sky: ["#e4f2ff", "#80a8ec"],
    lav: ["#e8eeff", "#5868d8"],
    gold: ["#fdf6a0", "#e8a830"],
    paper: ["#ffffff", "#ccd8fa"],
    globe: ["#68d0a0", "#1048b0"],
  };
  return (
    <svg className="absolute h-0 w-0" aria-hidden="true">
      <defs>
        {Object.entries(stops).map(([id, [a, b]]) => (
          <linearGradient key={id} id={id} x1="0" y1="0" x2="1" y2="1">
            <stop offset="0" stopColor={a} />
            <stop offset="1" stopColor={b} />
          </linearGradient>
        ))}
      </defs>
    </svg>
  );
};

/* ---------- tool bar parts ---------- */

const Tri = () => <span className="h-0 w-0 border-x-[3px] border-t-[3px] border-x-transparent border-t-black" />;

const Grip = () => (
  <span className="flex w-[7px] shrink-0 items-center justify-center">
    <span className="h-6 border-l-2 border-dotted border-[#a5a294]" />
  </span>
);
const Sep = () => <span className="mx-[2px] my-1 w-[2px] shrink-0 border-l border-[#c8c5b4] bg-white" />;
const End = () => <span className="w-[2px] shrink-0 border-l border-[#c0bdac] bg-white" />;
const Drop = () => (
  <button aria-label="Options" className="flex w-[11px] shrink-0 items-center justify-center">
    <Tri />
  </button>
);
const Overflow = () => (
  <button aria-label="Toolbar options" className="flex w-[14px] shrink-0 items-end justify-center pb-2">
    <Tri />
  </button>
);
const More = ({ className = "w-5" }) => (
  <button aria-label="More buttons" className={`${className} flex shrink-0 flex-col items-end justify-between pt-1 pr-1 pb-2`}>
    <svg viewBox="0 0 8 6" className="h-[6px] w-2" aria-hidden="true">
      <L d="M1 0L3 3L1 6M5 0L7 3L5 6" c="#000" w={1.4} />
    </svg>
    <Tri />
  </button>
);

const Tool = ({ name, active }) => (
  <button
    aria-label={name}
    className={`flex h-[31px] w-[31px] shrink-0 items-center justify-center self-center ${
      active ? "rounded-[3px] border border-[#7a5c3c] bg-[#ffc88c]" : ""
    }`}
  >
    <Icon name={name} />
  </button>
);

// "|" separator, ">" group end, "#" grip, "v" drop arrow, "." overflow, "»" more, "*x" pressed
const renderItem = (item, i) => {
  if (item === "|") return <Sep key={i} />;
  if (item === ">") return <End key={i} />;
  if (item === "#") return <Grip key={i} />;
  if (item === "v") return <Drop key={i} />;
  if (item === ".") return <Overflow key={i} />;
  if (item === "»") return <More key={i} />;
  if (item[0] === "*") return <Tool key={i} name={item.slice(1)} active />;
  return <Tool key={i} name={item} />;
};

const split = (text) => text.split(" ");

const row1a = split("newFile open save | cut copy paste | undo | info . > # fit fitGray zoomWin zoomIn rotate pan persp | cube v wedge v . > # *csysTorch csysPoints csys csysRotate csysMove displayWrench swapDiamonds");
const row1b = split("> # ruler angle");
const row2 = split("# sketch | extrude revolve sweep tube » > # unite v trimBody v | offset facets | blend faceBlend softBlend sheetBlend shell thread split hole emboss | pattern slab | instance . > # sheet1 sheet2 sheet3 grid4 studio trimSheet | waves");
const rowBottom = split("# sketchWrench sketchFace | mirror . > # *chain | lineEnds lineAxes parallel perpendicular tangentLine tangentTwo trimGrid | arc1 arc2 arc3 arc4 | circ1 circ2 circ3 circ4 | circ5 circ6 circ7 . > # dimension . >");

const barClass = "flex h-[34px] shrink-0 overflow-hidden border-t border-white bg-linear-to-b from-[#f6f5f0] to-[#ebe8d9]";

/* ---------- window parts ---------- */

const Latin = ({ children, className = "text-[11px]" }) => <span className={className}>{children}</span>;

const TitleBar = () => (
  <header className="flex h-[26px] shrink-0 items-center bg-[linear-gradient(#3c96ff,#0a5cec_12%,#0054e0_35%,#0066ff_75%,#0048cc)] pr-[3px] pl-[3px] text-white">
    <Icon name="nxTitle" className="h-4 w-4" />
    <h1 className="ml-[3px] flex-1 truncate text-sm font-bold whitespace-pre [text-shadow:1px_1px_#0a2a80]">
      波波碌碌<Latin className="text-[13px]"> NX 2009.0 - Modeling - [3.prt </Latin>（修改的）<Latin className="text-[13px]"> ]</Latin>
    </h1>
    <div className="flex gap-[2px]">
      {[
        ["Minimize", "M5 14H11", "bg-linear-to-br from-[#5c8cf4] to-[#1c48c8]", 3],
        ["Restore", "M8 5H15V11M5 8H12V15H5Z", "bg-linear-to-br from-[#5c8cf4] to-[#1c48c8]", 1.6],
        ["Close", "M5 5L15 15M15 5L5 15", "bg-linear-to-br from-[#f09070] to-[#c83010]", 2.2],
      ].map(([label, d, bg, w]) => (
        <button key={label} aria-label={label} className={`h-[21px] w-[21px] rounded-[3px] border border-white ${bg}`}>
          <svg viewBox="0 0 20 20" aria-hidden="true">
            <L d={d} c="#fff" w={w} />
          </svg>
        </button>
      ))}
    </div>
  </header>
);

const menus = [
  ["文件", "F"],
  ["编辑", "E"],
  ["视图", "V"],
  ["插入", "S"],
  ["格式", "R"],
  ["工具", "T"],
  ["装配", "A"],
  ["信息", "I"],
  ["分析", "L"],
  ["首选项", "P"],
  ["窗口", "O"],
];

const MenuBar = () => (
  <nav className="flex h-6 shrink-0 items-center bg-linear-to-r from-[#f8f7f5] to-[#ece9d8] pr-1">
    <Grip />
    <Icon name="part" className="h-[18px] w-[18px]" />
    <div className="ml-[5px] flex flex-1 gap-[11px]">
      {menus.map(([label, key]) => (
        <button key={key} className="text-xs whitespace-nowrap">
          {label}
          <Latin>
            (<u>{key}</u>)
          </Latin>
        </button>
      ))}
    </div>
    <div className="flex gap-[2px]">
      {[
        ["Minimize document", "M4 10H10", 2],
        ["Restore document", "M6 3H12V8M3 6H9V11H3Z", 1.4],
        ["Close document", "M4 3L11 10M11 3L4 10", 2],
      ].map(([label, d, w]) => (
        <button key={label} aria-label={label} className="h-[14px] w-[15px] bg-[#fbfaf6] shadow-[1px_1px_#d0cdbc]">
          <svg viewBox="0 0 15 14" aria-hidden="true">
            <L d={d} c="#585850" w={w} />
          </svg>
        </button>
      ))}
    </div>
  </nav>
);

const PromptBar = () => (
  <div className="flex h-[22px] shrink-0 items-stretch border-y border-t-[#9c9a8c] border-b-[#b8b5a4] bg-[#efecdf]">
    <p className="flex w-[47%] items-center truncate border-r border-[#c4c1b0] pb-1 pl-[2px] text-[13px] font-bold whitespace-pre">
      选择对象并使用<Latin> MB3</Latin>，或者双击某一对象
    </p>
    <span className="flex-1" />
    <span className="w-5 border-l border-[#c4c1b0]" />
    <span className="w-[35px] border-x border-[#c4c1b0]" />
    <span className="w-[3px]" />
  </div>
);

const resourceTabs = [
  ["assemblyNav", "partNav"],
  ["web", "training", "help"],
  ["clock", "palette", "wizard", "people"],
];

const ResourceBar = () => (
  <aside className="flex shrink-0 bg-[#aca899]">
    <div className="flex w-[33px] flex-col gap-3 pt-4 pl-[6px]">
      {resourceTabs.map((group) => (
        <div key={group[0]}>
          {group.map((name) => (
            <button
              key={name}
              aria-label={name}
              className="flex h-[42px] w-full items-center justify-center border-b border-[#c8c5b4] bg-linear-to-r from-[#f8f7f2] to-[#ebe8da]"
            >
              <Icon name={name} />
            </button>
          ))}
        </div>
      ))}
    </div>
    <div className="w-[11px] border-r-2 border-l border-l-white border-r-[#74726a] bg-[#ece9d8]" />
  </aside>
);

const Viewport = () => (
  <main className="min-w-0 flex-1 border-t-2 border-[#74726a] bg-[linear-gradient(#98bede,#b6cfe1_30%,#d9e0e5_63%,#e3e3e5_76%,#e4e4e4)]">
    <svg viewBox="44 142 898 561" preserveAspectRatio="xMidYMid slice" className="h-full w-full">
      <defs>
        <linearGradient id="top" x1="0" y1="0" x2="0" y2="1">
          <stop offset="0" stopColor="#8accff" />
          <stop offset="1" stopColor="#74b4f6" />
        </linearGradient>
        <linearGradient id="front" x1="0" y1="0" x2="1" y2="0.15">
          <stop offset="0" stopColor="#6fa6dc" />
          <stop offset="0.3" stopColor="#5886b4" />
          <stop offset="0.6" stopColor="#5a8aba" />
          <stop offset="1" stopColor="#6ca2da" />
        </linearGradient>
        <linearGradient id="side" x1="0" y1="0" x2="1" y2="0">
          <stop offset="0" stopColor="#70ace8" />
          <stop offset="1" stopColor="#78b2ec" />
        </linearGradient>
      </defs>

      {/* datum planes */}
      <path
        d="M44 505H704V506H44ZM767 505H942V506H767ZM44 507H708V508H44ZM772 507H942V508H772Z"
        fill="#4c0a0c"
        shapeRendering="crispEdges"
      />
      <path
        d="M735 142H736V472H735ZM740 142H741V475H740Z"
        fill="#2c3424"
        shapeRendering="crispEdges"
      />
      <path
        d="M735 537H736V703H735ZM740 539H741V703H740Z"
        fill="#101010"
        shapeRendering="crispEdges"
      />
      <path d="M738 142H739V300H738Z" fill="#8a7890" opacity="0.5" shapeRendering="crispEdges" />

      {/* base plate */}
      <F d="M259 427L281 416L698 406L717 409L583 477Z" f="#7cb4ec" />
      <F d="M259 427L583 477V498L259 449Z" f="#42607e" s="#142838" w={1.4} />
      <F d="M583 477L717 409V433L583 498Z" f="#5888b8" s="#142838" w={1.4} />
      <L d="M259 427L281 415M698 406L717 409" c="#142838" w={1.2} />

      {/* tapered body */}
      <F d="M320 361C390 385 470 398 560 398L580 472L274 425Q281 418 286 409Z" f="url(#front)" />
      <F d="M560 398C607 390 640 370 655 350L698 406L703 410L580 472Z" f="url(#side)" />
      <F d="M555 398L560 398L581 472L573 470Z" f="#8cbcec" />
      <L d="M560 399L579 471" c="#f4fbff" w={2.6} />
      <L d="M273 424L580 472L703 410" c="#142838" w={1.2} />
      <L d="M319 362L286 409" c="#4a7098" />
      <F
        d="M319 361C355 346 386 333 413 314Q417 311 423 312C495 327 570 341 651 347Q657 348 654 352C636 373 607 390 560 398C470 402 380 382 319 361Z"
        f="url(#top)"
        s="#142838"
        w={1.5}
      />

      {/* work coordinate system */}
      <L d="M258 409V426" c="#1010b0" w={2} />
      <L d="M258 448L278 438" c="#d8e4ee" w={1.4} />
      <L d="M257 448L296 454" c="#e81010" w={2} />
      <g fontFamily="Liberation Sans" fontSize="11">
        <text x="257" y="395" fill="#e07030">ZC</text>
        <text x="285" y="435" fill="#c4d4e4">YC</text>
        <text x="307" y="457" fill="#e8eef4">XC</text>
      </g>
    </svg>
  </main>
);

const GripH = ({ className = "w-9" }) => (
  <span className="flex h-[7px] justify-center">
    <span className={`${className} mt-[3px] h-0 border-t-2 border-dotted border-[#a5a294]`} />
  </span>
);
const SepH = () => <span className="mx-1 my-[2px] h-[2px] border-t border-[#c8c5b4] bg-white" />;
const TriLeft = ({ className = "h-[14px] justify-start pl-1" }) => (
  <button aria-label="Toolbar options" className={`${className} flex items-center`}>
    <span className="h-0 w-0 border-y-[3px] border-r-[3px] border-y-transparent border-r-black" />
  </button>
);
const SideTools = ({ names }) => names.map((name) => <Tool key={name} name={name} />);

const SideBars = () => (
  <aside className="flex shrink-0 border-l-2 border-white bg-linear-to-r from-[#f2f0e8] to-[#ebe8d6]">
    <div className="flex w-[46px] flex-col">
      <div className="flex flex-col border-r border-b border-[#cfccbc] bg-[#f3f2eb]">
        <GripH />
        <SideTools names={["lineArc", "spline"]} />
        <SepH />
        <SideTools names={["offsetCurve"]} />
        <div className="relative flex justify-center">
          <Tool name="curveFit" />
          <span className="absolute top-[14px] right-1 flex">
            <Tri />
          </span>
        </div>
        <SideTools names={["bridge", "simplify", "project", "intersect", "wrap"]} />
        <TriLeft />
      </div>
      <div className="flex flex-col border-r border-b border-[#cfccbc] bg-[#f3f2eb]">
        <GripH />
        <SideTools names={["wrenchDoc", "trimCurve", "trimCorner", "divide", "length", "smooth"]} />
        <TriLeft />
      </div>
    </div>
    <div className="flex w-[34px] flex-col">
      <div className="flex flex-col border-b border-[#cfccbc] bg-[#f1efe6]">
        <GripH className="w-6" />
        <button aria-label="snapFilter" className="my-[3px] flex h-[25px] w-[25px] items-center justify-center self-center border-2 border-[#d04850]">
          <Icon name="snapFilter" className="h-[22px] w-[22px]" />
        </button>
        <TriLeft className="h-[6px] justify-center" />
        <SepH />
        <SideTools names={["phone"]} />
        <TriLeft />
      </div>
      <div className="flex flex-col border-b border-[#cfccbc] bg-[#f1efe6] pt-[2px]">
        <GripH className="w-6" />
        <SideTools names={["snapEnd", "snapMid", "snapCtrl", "snapInt", "snapCenter", "snapQuad", "snapPoint"]} />
        <TriLeft />
      </div>
    </div>
  </aside>
);

const tasks = [
  { icon: "word", cjk: "碳", text: "..." },
  { icon: "word", cjk: "摩", text: " ..." },
  { icon: "folder", text: "\\\\c..." },
  { icon: "firefox", text: "[01..." },
  { icon: "nxTitle", cjk: "波", text: "...", active: true },
  { icon: "acad", text: "Aut..." },
  { icon: "copier", text: "cop..." },
  { icon: "eye", cjk: "新", text: "..." },
];

const TaskBar = () => (
  <footer className="flex h-[30px] shrink-0 items-stretch bg-[linear-gradient(#3c78e8,#4088f8_8%,#245edb_18%,#2560dc_85%,#1a46a8)] text-white">
    <button className="flex w-[97px] shrink-0 items-center gap-1 rounded-r-[10px] bg-[linear-gradient(#5cb45c,#3c9c3c_15%,#379437_75%,#2a742a)] pl-[9px] shadow-[inset_-3px_-2px_4px_#1d5a1d]">
      <Icon name="flag" className="h-[22px] w-[22px]" />
      <span className="text-[19px] leading-6 italic [text-shadow:1px_1px_1px_#1a4a1a]">开始</span>
    </button>
    <div className="flex w-[102px] shrink-0 items-center gap-[5px] pl-[11px]">
      {["desktop", "mail", "ie"].map((name) => (
        <button key={name} aria-label={name} className="flex h-[18px] w-[18px]">
          <Icon name={name} className="h-[18px] w-[18px]" />
        </button>
      ))}
      <button aria-label="More shortcuts" className="mb-3 ml-[4px]">
        <svg viewBox="0 0 8 6" className="h-[6px] w-2" aria-hidden="true">
          <L d="M1 0L3 3L1 6M5 0L7 3L5 6" c="#b8d0ff" />
        </svg>
      </button>
    </div>
    <div className="flex min-w-0 flex-1 items-center gap-[2px] pt-[2px]">
      {tasks.map((task, i) => (
        <button
          key={i}
          className={`flex h-6 min-w-0 flex-1 items-center gap-[5px] overflow-hidden rounded-[3px] pl-[8px] text-xs whitespace-pre ${
            task.active
              ? "bg-[#1c4fb4] shadow-[inset_1px_1px_2px_#0c2c78]"
              : "bg-[#3c80f2] shadow-[inset_1px_1px_#6aa4ff,inset_-1px_-1px_#2a62cc]"
          }`}
        >
          <Icon name={task.icon} className="h-4 w-4" />
          <span>
            {task.cjk}
            <Latin>{task.text}</Latin>
          </span>
        </button>
      ))}
    </div>
    <div className="flex w-[42px] shrink-0 items-center justify-center">
      <Icon name="keyboard" className="h-[17px] w-[17px]" />
    </div>
    <div className="relative flex w-[131px] shrink-0 items-center gap-[2px] border-l border-[#0a3c98] bg-[linear-gradient(#18b0f8,#0f98ec_15%,#1090e8_85%,#0c68c0)] pl-[9px]">
      <button aria-label="Show hidden icons" className="absolute -left-[8px] h-4 w-4 rounded-full border border-[#80c8f8] bg-[#2888e8]">
        <svg viewBox="0 0 14 14" aria-hidden="true">
          <L d="M9 3L5 7L9 11" c="#fff" w={2} />
        </svg>
      </button>
      <Icon name="kav" className="h-4 w-4" />
      <Icon name="network" className="h-4 w-4" />
      <Icon name="volume" className="h-4 w-4" />
      <Icon name="shield" className="h-4 w-4" />
      <time className="ml-[6px] text-[11px]">16:54</time>
    </div>
  </footer>
);

const App = () => (
  <div className="flex h-screen flex-col overflow-hidden bg-[#ece9d8] font-['Liberation_Mono','Noto_Sans_CJK_SC',monospace] text-black">
    <Gradients />
    <TitleBar />
    <MenuBar />
    <div className={barClass}>
      <Grip />
      <button className="flex w-[68px] shrink-0 items-center gap-[3px] pl-1 text-xs">
        <Icon name="nx" />
        <span className="whitespace-nowrap">起始</span>
        <Tri />
      </button>
      {row1a.map(renderItem)}
      <More className="w-[27px]" />
      {row1b.map(renderItem)}
      <Overflow />
    </div>
    <div className={barClass}>
      {row2.map(renderItem)}
      <span className="flex-1" />
      <More />
    </div>
    <PromptBar />
    <div className="flex min-h-0 flex-1">
      <ResourceBar />
      <Viewport />
      <SideBars />
    </div>
    <div className="flex h-[35px] shrink-0 overflow-hidden border-t border-white bg-linear-to-b from-[#f6f5f0] to-[#ebe8d9]">
      {rowBottom.map(renderItem)}
    </div>
    <TaskBar />
  </div>
);

export default App;
